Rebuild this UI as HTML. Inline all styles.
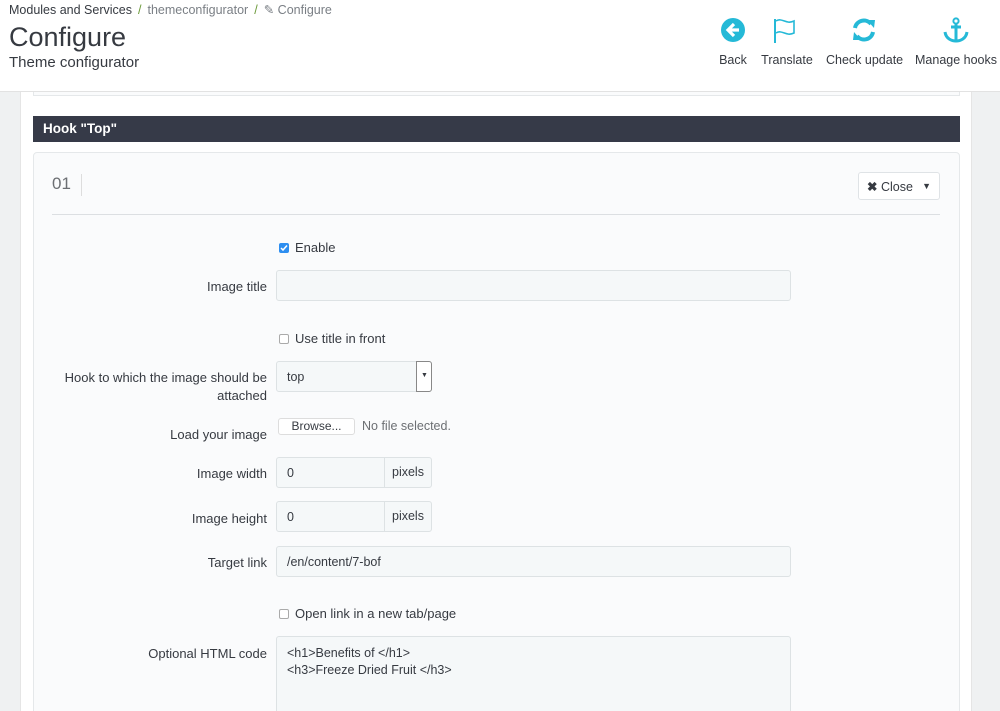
<!DOCTYPE html>
<html style="height:711px;overflow:hidden"><head><style>
*{box-sizing:border-box;margin:0;padding:0}
body{width:1000px;height:711px;overflow:hidden;background:#eff1f2;font-family:"Liberation Sans",sans-serif;color:#363a41;position:relative}
.hdr{position:absolute;left:0;top:0;width:1000px;height:92px;background:#fff;border-bottom:1px solid #e2e2e2}
.bc{position:absolute;left:9px;top:2px;font-size:12.5px;color:#363a41}
.bc .g{color:#7a7f85}.bc .s{color:#6c9a3a;margin:0 6px}
h1{position:absolute;left:9px;top:22px;font-size:27px;font-weight:normal;color:#363a41}
.sub{position:absolute;left:9px;top:54px;font-size:15px}
.tb{position:absolute;top:17px;text-align:center;font-size:12.5px;color:#363a41;white-space:nowrap}
.tb svg{display:block;margin:0 auto 10px}
.outer{position:absolute;left:20px;top:92px;width:952px;height:619px;background:#fff;border-left:1px solid #e5e5e5;border-right:1px solid #e5e5e5}
.top{position:absolute;left:33px;top:92px;width:927px;height:4px;border:1px solid #e5e8ea;border-top:none;background:#fafbfc}
.hook{position:absolute;left:33px;top:116px;width:927px;height:26px;background:#363a48;color:#fff;font-weight:bold;font-size:13.5px;padding:5px 10px}
.panel{position:absolute;left:33px;top:152px;width:927px;height:570px;background:#fafbfc;border:1px solid #e5e8ea;border-radius:4px}
.num{position:absolute;left:52px;top:174px;font-size:17px;color:#6c6f73;padding-right:10px;border-right:1px solid #ddd;height:22px}
.hr{position:absolute;left:52px;top:214px;width:888px;border-top:1px solid #dcdfe2}
.close{position:absolute;left:858px;top:172px;width:82px;height:28px;background:#fff;border:1px solid #dfe3e6;border-radius:3px;font-size:12.5px;padding:6px 8px}
.lbl{position:absolute;right:733px;font-size:13px;text-align:right;color:#363a41;line-height:18px}
.inp{position:absolute;left:276px;height:31px;background:#f5f8f9;border:1px solid #dde2e4;border-radius:3px;font-size:12.5px;padding:8px 10px}
.cb{position:absolute;left:279px;font-size:13px}
.cb i{display:inline-block;width:10px;height:10px;border:1px solid #aaa;border-radius:2px;vertical-align:-1px;margin-right:6px;background:#fff;position:relative}
.addon{position:absolute;left:384px;height:29px;width:47px;border-left:1px solid #dde2e4;top:0;padding:7px 7px;color:#363a41}
</style></head><body>
<div class="hdr">
<div class="bc">Modules and Services<span class="s">/</span><span class="g">themeconfigurator</span><span class="s">/</span><span class="g">&#9998; Configure</span></div>
<h1>Configure</h1>
<div class="sub">Theme configurator</div>
<div class="tb" style="left:718px;width:30px"><svg width="26" height="26" viewBox="0 0 26 26"><circle cx="13" cy="13" r="12" fill="#25b9d7"/><path d="M14 7 L8 13 L14 19 M8 13 H19" stroke="#fff" stroke-width="3.2" fill="none"/></svg>Back</div>
<div class="tb" style="left:760px;width:54px"><svg width="30" height="26" viewBox="0 0 30 26"><path d="M3 2 V26" stroke="#25b9d7" stroke-width="2"/><path d="M4 4 C10 0 14 8 22 4 V16 C14 20 10 12 4 16" stroke="#25b9d7" stroke-width="1.6" fill="none"/></svg>Translate</div>
<div class="tb" style="left:826px;width:76px"><svg width="26" height="26" viewBox="0 0 26 26"><path d="M4 11 A9 9 0 0 1 20 7" stroke="#25b9d7" stroke-width="4" fill="none"/><path d="M16 3 L24 3 L23 11 Z" fill="#25b9d7"/><path d="M22 15 A9 9 0 0 1 6 19" stroke="#25b9d7" stroke-width="4" fill="none"/><path d="M10 23 L2 23 L3 15 Z" fill="#25b9d7"/></svg>Check update</div>
<div class="tb" style="left:915px;width:82px"><svg width="28" height="26" viewBox="0 0 28 26"><circle cx="14" cy="4" r="2.6" stroke="#25b9d7" stroke-width="2" fill="none"/><path d="M14 7 V24 M9 10 H19 M3 15 C4 22 10 24 14 24 C18 24 24 22 25 15" stroke="#25b9d7" stroke-width="3" fill="none"/></svg>Manage hooks</div>
</div>
<div class="outer"></div>
<div class="top"></div>
<div class="hook">Hook "Top"</div>
<div class="panel"></div>
<div class="num">01</div>
<div class="hr"></div>
<div class="close"><b>&#10006;</b> Close <span style="float:right;font-size:9px;margin-top:2px">&#9660;</span></div>

<div class="cb" style="top:240px"><i style="background:#2d8ef0;border-color:#2d8ef0"><svg width="8" height="8" viewBox="0 0 8 8" style="position:absolute;left:0;top:0"><path d="M1 4 L3 6 L7 1.5" stroke="#fff" stroke-width="1.5" fill="none"/></svg></i>Enable</div>
<div class="lbl" style="top:278px">Image title</div>
<div class="inp" style="top:270px;width:515px"></div>
<div class="cb" style="top:331px"><i></i>Use title in front</div>
<div class="lbl" style="top:369px">Hook to which the image should be<br>attached</div>
<div class="inp" style="top:361px;width:156px;background:#f5f8f9">top<span style="position:absolute;right:-1px;top:-1px;width:16px;height:31px;border:1px solid #888;border-radius:0 3px 3px 0;background:#fff;font-size:7px;padding:10px 4px">&#9660;</span></div>
<div class="lbl" style="top:426px">Load your image</div>
<div style="position:absolute;left:278px;top:418px;width:77px;height:17px;background:#fff;border:1px solid #ddd;border-radius:3px;font-size:12px;text-align:center;line-height:15px">Browse...</div>
<div style="position:absolute;left:362px;top:419px;font-size:12.5px;color:#6c6f73">No file selected.</div>
<div class="lbl" style="top:465px">Image width</div>
<div class="inp" style="top:457px;width:156px">0<span class="addon" style="left:107px">pixels</span></div>
<div class="lbl" style="top:510px">Image height</div>
<div class="inp" style="top:501px;width:156px">0<span class="addon" style="left:107px">pixels</span></div>
<div class="lbl" style="top:554px">Target link</div>
<div class="inp" style="top:546px;width:515px">/en/content/7-bof</div>
<div class="cb" style="top:606px"><i></i>Open link in a new tab/page</div>
<div class="lbl" style="top:645px">Optional HTML code</div>
<div class="inp" style="top:636px;width:515px;height:90px;padding-top:8px;line-height:17px">&lt;h1&gt;Benefits of &lt;/h1&gt;<br>&lt;h3&gt;Freeze Dried Fruit &lt;/h3&gt;</div>
</body></html>
